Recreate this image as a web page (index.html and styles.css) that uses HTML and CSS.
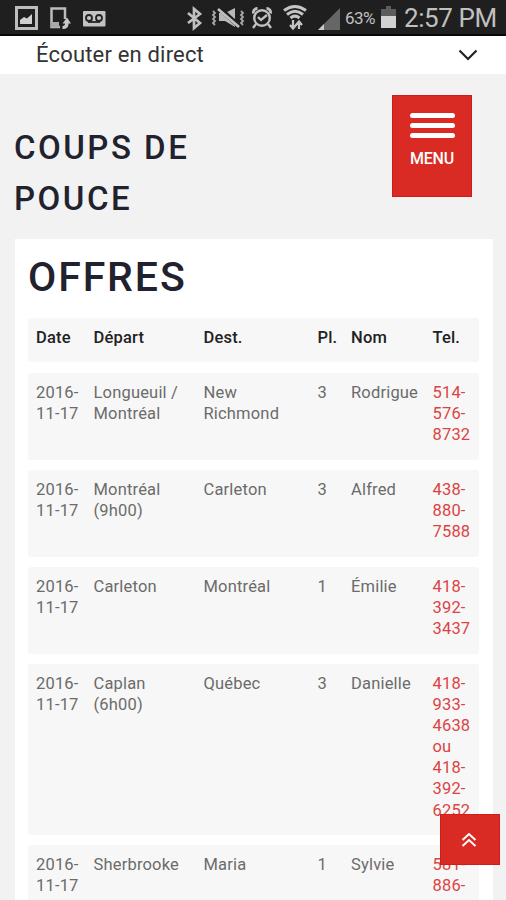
FILE: index.html
```
<!DOCTYPE html>
<html lang="fr">
<head>
<meta charset="utf-8">
<meta name="viewport" content="width=device-width">
<title>Coups de pouce</title>
<link rel="stylesheet" href="styles.css">
</head>
<body>
<div class="screen">
  <header class="status">
    <svg class="left-icons" width="110" height="35" viewBox="0 0 110 35">
      <rect x="16.500" y="7.500" width="20" height="21" fill="#1f1f1f" stroke="#bdbdbd" stroke-width="3"/>
      <path d="M20 24v-4l4-3 3 1.500 5-4.500v10z" fill="#d0d0d0"/>
      <path d="M65 19V8.500H51.500V27H60" fill="none" stroke="#bdbdbd" stroke-width="2.500"/>
      <path d="M51 22h8v5.500h-8z" fill="#a8a8a8"/>
      <path d="M67 17.500l4 6h-2.500c0 4-2 5.500-6 5.500v-3c2 0 2.500-1 2.500-2.500h-2.500z" fill="#c8c8c8"/>
      <rect x="83" y="11" width="22.500" height="15.500" rx="1" fill="#c2c2c2"/>
      <g fill="none" stroke="#222" stroke-width="1.800"><circle cx="89" cy="18" r="3"/><circle cx="99" cy="18" r="3"/><path d="M88 22h12"/></g>
    </svg>
    <svg class="right-icons" width="156" height="35" viewBox="185 0 156 35">
      <path d="M188 13l12 10-6 5V9l6 5-12 9" fill="none" stroke="#c0c0c0" stroke-width="2.700"/>
      <path d="M213 11l2 2-2 2 2 2-2 2 2 2-2 2 2 2M241 11l2 2-2 2 2 2-2 2 2 2-2 2 2 2" fill="none" stroke="#a8a8a8" stroke-width="1.800"/>
      <path d="M219 13h6l10-5v19l-10-6h-6z" fill="#b8b8b8"/>
      <path d="M218 7l22 20" stroke="#1f1f1f" stroke-width="5"/><path d="M218 9l21 18" stroke="#c0c0c0" stroke-width="2.700"/>
      <g fill="none" stroke="#c0c0c0" stroke-width="2.400"><circle cx="262" cy="18" r="7.800"/><path d="M258 17l3 3 6-5M256 24l-3 4M268 24l3 4"/><path d="M253.500 13.500a4 4 0 0 1 4-5M266.500 8.500a4 4 0 0 1 4 5" stroke-width="2.800"/></g>
      <g fill="none" stroke="#c4c4c4" stroke-width="3"><path d="M284 10.500c7-5 15-5 22 0M287 14.500c5-4 11-4 16 0M290.500 18c3-2.500 6-2.500 9 0"/></g>
      <path d="M293 20v8M290 25l3 3.500 3-3.500M299 29v-7M296 25l3-3.500 3 3.500" fill="none" stroke="#c4c4c4" stroke-width="2.200"/>
      <path d="M318 30L340 8v22z" fill="#666"/><path d="M318 30l6-6v6z" fill="#c8c8c8"/>
    </svg>
    <span class="percent">63%</span>
    <svg class="battery" width="18" height="35" viewBox="0 0 18 35"><path d="M1 9h5V6h5v3h5v19H1z" fill="#5c5c5c"/><path d="M1 16h15v12H1z" fill="#d2d2d2"/></svg>
    <span class="clock">2:57 PM</span>
  </header>
  <div class="listen">
    <span>Écouter en direct</span>
    <svg width="20" height="12" viewBox="0 0 20 12"><path d="M1.500 1.500L10 10l8.500-8.500" fill="none" stroke="#222" stroke-width="2.200"/></svg>
  </div>
  <div class="top">
    <h1>COUPS DE<br>POUCE</h1>
    <div class="menu"><i></i><i></i><i></i><span>MENU</span></div>
  </div>
  <main class="card">
    <h2>OFFRES</h2>
    <div class="row head"><b>Date</b><b>Départ</b><b>Dest.</b><b>Pl.</b><b>Nom</b><b>Tel.</b></div>
    <div class="row"><span>2016-<br>11-17</span><span>Longueuil /<br>Montréal</span><span>New<br>Richmond</span><span>3</span><span>Rodrigue</span><a>514-<br>576-<br>8732</a></div>
    <div class="row"><span>2016-<br>11-17</span><span>Montréal<br>(9h00)</span><span>Carleton</span><span>3</span><span>Alfred</span><a>438-<br>880-<br>7588</a></div>
    <div class="row"><span>2016-<br>11-17</span><span>Carleton</span><span>Montréal</span><span>1</span><span>Émilie</span><a>418-<br>392-<br>3437</a></div>
    <div class="row"><span>2016-<br>11-17</span><span>Caplan<br>(6h00)</span><span>Québec</span><span>3</span><span>Danielle</span><a>418-<br>933-<br>4638<br>ou<br>418-<br>392-<br>6252</a></div>
    <div class="row"><span>2016-<br>11-17</span><span>Sherbrooke</span><span>Maria</span><span>1</span><span>Sylvie</span><a>581-<br>886-</a></div>
  </main>
  <div class="to-top"><svg width="16" height="16" viewBox="0 0 16 16"><path d="M1.500 8L8 2l6.500 6M1.500 14L8 8l6.500 6" fill="none" stroke="#fff" stroke-width="2"/></svg></div>
</div>
</body>
</html>
```
FILE: styles.css
```
* { box-sizing: border-box; }
body { margin: 0; font-family: Roboto, "Liberation Sans", sans-serif; }
.screen { position: relative; width: 506px; height: 900px; overflow: hidden; background: #f2f2f2; }
.status { height: 36px; background: #1f1f1f; border-bottom: 2px solid #080808; display: flex; color: #c0c0c0; white-space: nowrap; }
.status svg { flex: none; }
.right-icons { margin-left: 75px; }
.percent { width: 38px; margin-left: 4px; font-size: 17px; line-height: 37px; letter-spacing: -0.5px; }
.battery { margin-left: -3px; }
.clock { margin-left: 6px; font-size: 26px; line-height: 36px; letter-spacing: -0.400px; }
.listen { height: 38px; background: #fff; display: flex; justify-content: space-between; padding: 0 28px 0 36px; color: #333; font-size: 22px; line-height: 37px; letter-spacing: 0.180px; }
.listen svg { margin-top: 13px; }
.top { height: 165px; padding: 21px 34px 0 15px; display: flex; justify-content: space-between; align-items: flex-start; }
h1, h2 { margin: 0; color: #22222f; font-weight: 500; }
h1 { margin-top: 28px; margin-left: -1px; font-size: 33px; line-height: 50.500px; letter-spacing: 2.500px; }
.menu { width: 80px; height: 102px; background: #d92a24; border: 1px solid #d01c18; padding-top: 17px; display: flex; flex-direction: column; align-items: center; gap: 5px; color: #fff; }
.menu i { width: 45px; height: 5px; border-radius: 2.500px; background: #fff; }
.menu span { margin-top: 6px; font-size: 16px; line-height: 20px; font-weight: 500; letter-spacing: -0.200px; }
.card { margin: 0 13px 0 15px; padding: 12px 14px 0 13px; background: #fff; height: 700px; }
h2 { font-size: 41px; line-height: 52px; height: 67px; letter-spacing: 1.900px; }
.row { display: grid; grid-template-columns: 57.500px 110px 114px 33.500px 81.500px 1fr; margin-bottom: 10.300px; padding: 9px 0 14.300px 8px; min-height: 86.700px; background: #f7f7f7; border-radius: 3px; color: #6b6b6b; font-size: 16.500px; line-height: 21.100px; letter-spacing: 0.180px; white-space: nowrap; }
.row.head { min-height: 44px; height: 44px; color: #222; margin-bottom: 11px; }
.row b { font-weight: 500; }
.row a { color: #dc4444; }
.to-top { position: absolute; left: 440px; top: 814px; width: 60px; height: 51px; background: #d92a24; border: 1px solid #cf1e1a; display: flex; align-items: center; justify-content: center; padding-right: 3px; }
```
